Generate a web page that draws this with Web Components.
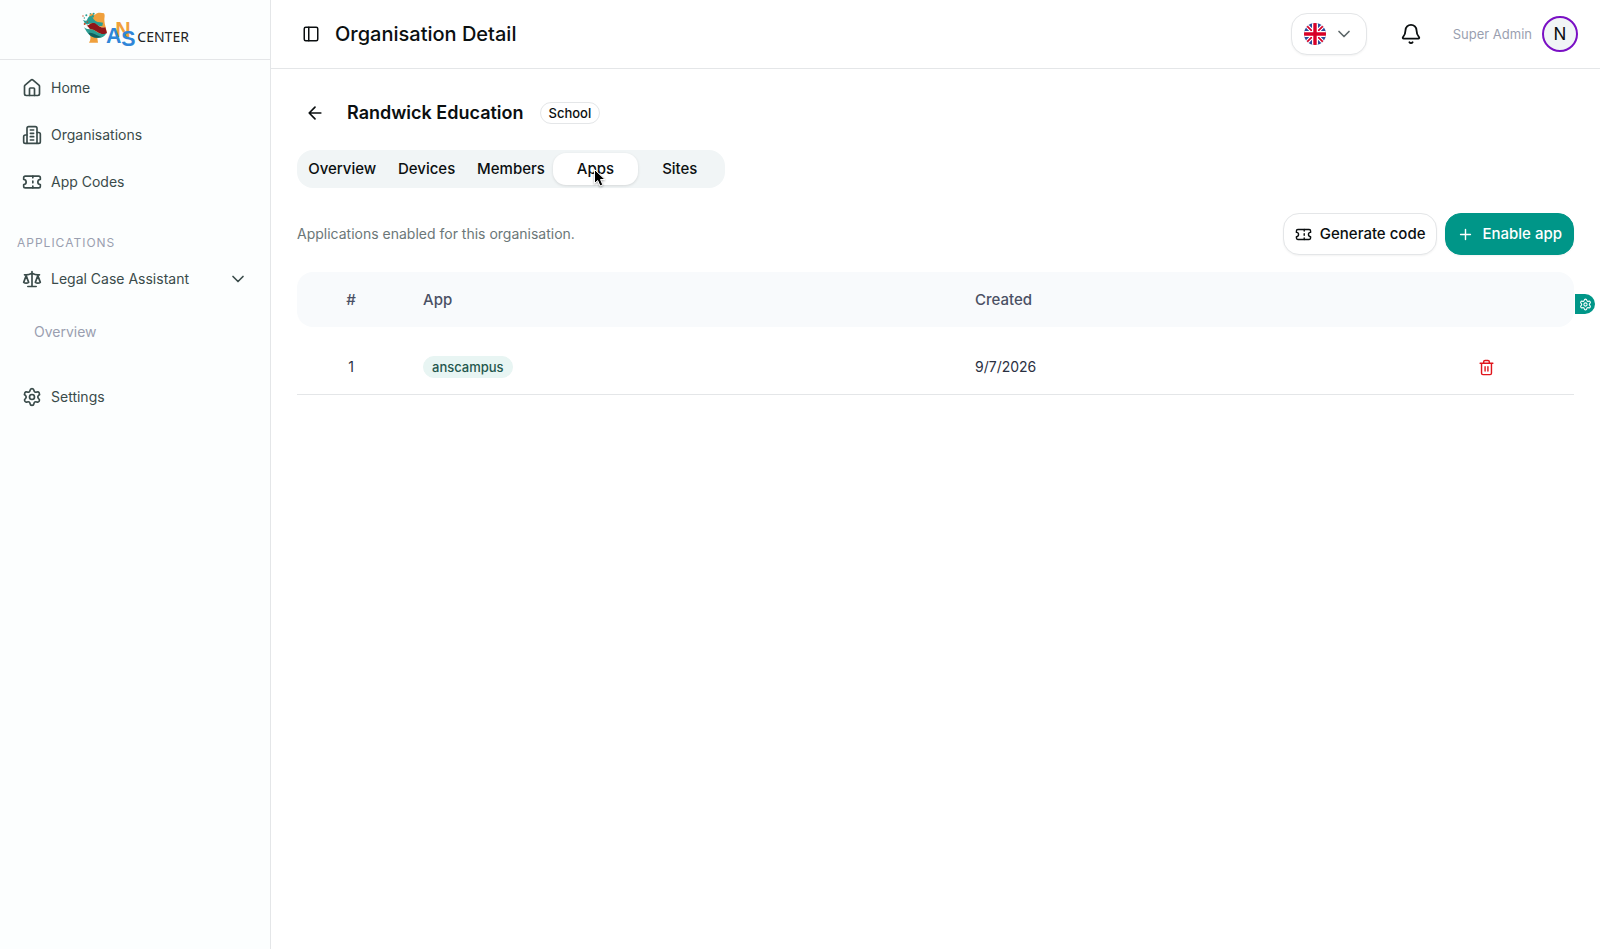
<!DOCTYPE html>
<html lang="en">
<head>
<meta charset="utf-8">
<meta name="viewport" content="width=device-width, initial-scale=1">
<title>Organisation Detail</title>
<style>
  html, body { margin: 0; height: 100%; }
  body {
    font-family: Inter, "Liberation Sans", sans-serif;
    font-size: 14px; line-height: 20px; color: #0b0f10; background: #fff;
    --line: #e4e6e8; --teal: #009688; --ink: #3a4b4a; --muted: #9a9fb0;
  }
</style>
</head>
<body>
<org-app></org-app>

<script>
const ICONS = {
  home: '<path d="M15 21v-8a1 1 0 0 0-1-1h-4a1 1 0 0 0-1 1v8"/><path d="M3 10a2 2 0 0 1 .709-1.528l7-5.999a2 2 0 0 1 2.582 0l7 5.999A2 2 0 0 1 21 10v9a2 2 0 0 1-2 2H5a2 2 0 0 1-2-2z"/>',
  building: '<path d="M6 22V4a2 2 0 0 1 2-2h8a2 2 0 0 1 2 2v18Z"/><path d="M6 12H4a2 2 0 0 0-2 2v6a2 2 0 0 0 2 2h2"/><path d="M18 9h2a2 2 0 0 1 2 2v9a2 2 0 0 1-2 2h-2"/><path d="M10 6h4M10 10h4M10 14h4M10 18h4"/>',
  ticket: '<path d="M2 9a3 3 0 0 1 0 6v2a2 2 0 0 0 2 2h16a2 2 0 0 0 2-2v-2a3 3 0 0 1 0-6V7a2 2 0 0 0-2-2H4a2 2 0 0 0-2 2Z"/><path d="M13 5v2M13 17v2M13 11v2"/>',
  scale: '<path d="m16 16 3-8 3 8c-.87.65-1.92 1-3 1s-2.13-.35-3-1Z"/><path d="m2 16 3-8 3 8c-.87.65-1.92 1-3 1s-2.13-.35-3-1Z"/><path d="M7 21h10M12 3v18M3 7h2c2 0 5-1 7-2 2 1 5 2 7 2h2"/>',
  settings: '<path d="M9.671 4.136a2.34 2.34 0 0 1 4.659 0 2.34 2.34 0 0 0 3.319 1.915 2.34 2.34 0 0 1 2.33 4.033 2.34 2.34 0 0 0 0 3.831 2.34 2.34 0 0 1-2.33 4.033 2.34 2.34 0 0 0-3.319 1.915 2.34 2.34 0 0 1-4.659 0 2.34 2.34 0 0 0-3.32-1.915 2.34 2.34 0 0 1-2.33-4.033 2.34 2.34 0 0 0 0-3.831A2.34 2.34 0 0 1 6.35 6.051a2.34 2.34 0 0 0 3.319-1.915"/><circle cx="12" cy="12" r="3"/>',
  chevron: '<path d="m6 9 6 6 6-6"/>',
  panel: '<rect width="18" height="18" x="3" y="3" rx="2"/><path d="M9 3v18"/>',
  bell: '<path d="M10.268 21a2 2 0 0 0 3.464 0"/><path d="M3.262 15.326A1 1 0 0 0 4 17h16a1 1 0 0 0 .74-1.673C19.41 13.956 18 12.499 18 8A6 6 0 0 0 6 8c0 4.499-1.411 5.956-2.738 7.326"/>',
  back: '<path d="m12 19-7-7 7-7M19 12H5"/>',
  plus: '<path d="M5 12h14M12 5v14"/>',
  trash: '<path d="M3 6h18M19 6v14a2 2 0 0 1-2 2H7a2 2 0 0 1-2-2V6M8 6V4a2 2 0 0 1 2-2h4a2 2 0 0 1 2 2v2M10 11v6M14 11v6"/>'
};

function define(name, html, setup) {
  const template = document.createElement('template');
  template.innerHTML = html;
  customElements.define(name, class extends HTMLElement {
    constructor() {
      super();
      this.attachShadow({ mode: 'open' }).append(template.content.cloneNode(true));
    }
    connectedCallback() { if (setup) setup(this, this.shadowRoot); }
  });
}

define('ui-icon', `
  <style>
    :host { display: block; flex: none; width: var(--size, 20px); height: var(--size, 20px); }
    svg { display: block; width: 100%; height: 100%; fill: none; stroke: currentColor;
          stroke-width: 2; stroke-linecap: round; stroke-linejoin: round; }
  </style>
  <svg viewBox="0 0 24 24" aria-hidden="true"></svg>`,
  (el, root) => { root.querySelector('svg').innerHTML = ICONS[el.getAttribute('name')]; });

define('brand-logo', `
  <style>
    :host { display: block; width: 130px; height: 59px; }
    svg { display: block; width: 100%; height: 100%; }
    .ans { font: bold 64px "Liberation Sans", sans-serif; }
    .center { font: 42px "Noto Sans", sans-serif; fill: #222; }
  </style>
  <svg viewBox="0 0 390 177" role="img" aria-label="ANS Center">
    <path fill="#f0a03c" d="M58 44l8-4 8 5c6-8 18-8 28-5 3 5 2 10 1 17 0 10 2 17 4 25l3 14-7 4c-3 12-8 13-21 14l2 14H57c6-9 5-17 2-26z"/>
    <path fill="#2b9d92" d="M38 60c7 2 11 5 14-2 3-9 10-14 15-6 5 9 12 15 24 15l8 1-2 10c-12 2-19-3-27-7-10-4-15 6-23 1-5-3-4-8-9-12z"/>
    <path fill="#f3d29a" d="M49 77c10 2 16-7 25-5 12 3 17 12 29 9l1 6c-12 4-20-3-29-6-10-4-18 2-26-4z"/>
    <path fill="#8f1519" d="M50 76c7 2 10-6 18-7 11-1 14 8 22 11 6 3 10 3 16 2l5 17c-6 6-15 5-24 0-8-5-14-9-23-11-7-1-8-8-14-12z"/>
    <path fill="#2b9d92" d="M42 81c8 9 17 5 27 8 11 4 18 14 34 13l6-2c-6 14-25 18-42 10-13-5-19-18-25-29z"/>
    <path fill="#115f5c" d="M55 99c14-3 22 8 38 11-13 7-31 3-38-11z"/>
    <g fill="#c8471f"><circle cx="39" cy="48" r="2"/><circle cx="44" cy="72" r="3"/><circle cx="52" cy="66" r="2"/></g>
    <g fill="#2b9d92"><circle cx="61" cy="41" r="2"/><circle cx="71" cy="41" r="3"/><circle cx="68" cy="49" r="4"/><circle cx="49" cy="46" r="3"/><circle cx="43" cy="54" r="2"/></g>
    <text class="ans" x="136" y="111" fill="#f0a03c">N</text>
    <text class="ans" x="108" y="129" fill="#2f86d8">A</text>
    <text class="ans" x="154" y="139" fill="#2f86d8">S</text>
    <text class="center" x="202" y="127">CENTER</text>
  </svg>`);

define('nav-item', `
  <style>
    :host { display: block; }
    a { display: flex; align-items: center; gap: 9px; height: 40px; padding: 0 22px;
        color: var(--ink); text-decoration: none; }
    span { flex: 1; }
    :host([sub]) a { padding-left: 34px; color: var(--muted); }
  </style>
  <a href="#"><span><slot></slot></span></a>`,
  (el, root) => {
    const link = root.querySelector('a');
    const add = (name, where) => {
      const icon = document.createElement('ui-icon');
      icon.setAttribute('name', name);
      link[where](icon);
    };
    if (el.hasAttribute('icon')) add(el.getAttribute('icon'), 'prepend');
    if (el.hasAttribute('expandable')) add('chevron', 'append');
  });

define('side-bar', `
  <style>
    :host { display: flex; flex-direction: column; box-sizing: border-box; width: 271px; flex: none;
            background: #fcfefe; border-right: 1px solid var(--line); }
    header { display: flex; justify-content: center; border-bottom: 1px solid var(--line); }
    nav { display: flex; flex-direction: column; padding: 8px 0; }
    .group { display: flex; flex-direction: column; gap: 7px; }
    h2 { margin: 31px 0 6px; padding: 0 17px; font-size: 12px; line-height: 20px; font-weight: 400;
         letter-spacing: 1px; color: var(--muted); }
    .apps { gap: 13px; margin-bottom: 25px; }
  </style>
  <header><brand-logo></brand-logo></header>
  <nav aria-label="Main">
    <div class="group">
      <nav-item icon="home">Home</nav-item>
      <nav-item icon="building">Organisations</nav-item>
      <nav-item icon="ticket">App Codes</nav-item>
    </div>
    <h2>APPLICATIONS</h2>
    <div class="group apps">
      <nav-item icon="scale" expandable>Legal Case Assistant</nav-item>
      <nav-item sub>Overview</nav-item>
    </div>
    <nav-item icon="settings">Settings</nav-item>
  </nav>`);

define('language-picker', `
  <style>
    :host { display: block; }
    button { display: flex; align-items: center; gap: 8px; height: 42px; padding: 0 12px; background: #fff;
             border: 1px solid var(--line); border-radius: 16px; box-shadow: 0 1px 2px #0000000d; color: #5d6769; }
    svg { display: block; width: 22px; height: 22px; }
  </style>
  <button type="button" aria-label="Language: English">
    <svg viewBox="0 0 22 22" aria-hidden="true">
      <clipPath id="round"><circle cx="11" cy="11" r="11"/></clipPath>
      <g clip-path="url(#round)">
        <path fill="#2b4a9b" d="M0 0h22v22H0z"/>
        <path stroke="#fff" stroke-width="4" d="M0 0l22 22M22 0L0 22"/>
        <path stroke="#d80027" stroke-width="1.6" d="M0 0l22 22M22 0L0 22"/>
        <path stroke="#fff" stroke-width="6" d="M11 0v22M0 11h22"/>
        <path stroke="#d80027" stroke-width="3.4" d="M11 0v22M0 11h22"/>
      </g>
    </svg>
    <ui-icon name="chevron"></ui-icon>
  </button>`);

define('user-badge', `
  <style>
    :host { display: flex; align-items: center; gap: 10px; font-size: 13px; color: var(--muted); }
    b { display: grid; place-items: center; box-sizing: border-box; width: 36px; height: 36px; border-radius: 50%;
        border: 2px solid #7a10c4; background: #f1f5f6; font-size: 17px; font-weight: 400; color: #0b0f10; }
  </style>
  <span><slot></slot></span><b>N</b>`);

define('top-bar', `
  <style>
    :host { display: flex; align-items: center; box-sizing: border-box; height: 69px; padding: 0 22px 0 31px;
            border-bottom: 1px solid var(--line); }
    h1 { flex: 1; margin: 0 0 0 7px; font-size: 20px; line-height: 28px; font-weight: 500; }
    button { padding: 0; border: 0; background: none; color: inherit; }
    .toggle { --size: 18px; padding: 0 8px 0 0; }
    .bell { --size: 22px; margin: 0 31px 0 33px; }
  </style>
  <button class="toggle" type="button" aria-label="Toggle sidebar"><ui-icon name="panel"></ui-icon></button>
  <h1><slot></slot></h1>
  <language-picker></language-picker>
  <button class="bell" type="button" aria-label="Notifications"><ui-icon name="bell"></ui-icon></button>
  <user-badge>Super Admin</user-badge>`);

define('ui-badge', `
  <style>
    :host { display: inline-block; box-sizing: border-box; height: 22px; padding: 0 8px; border: 1px solid var(--line);
            border-radius: 11px; font-size: 13px; line-height: 20px; font-weight: 500; }
    :host([tone="teal"]) { border-color: #e8f5f3; background: #e8f5f3; color: #24574d; }
  </style>
  <slot></slot>`);

define('ui-button', `
  <style>
    :host { display: block; }
    button { display: flex; align-items: center; gap: 8px; height: 42px; padding: 0 11px; border-radius: 16px;
             border: 1px solid var(--line); background: #fff; box-shadow: 0 1px 2px #0000000d;
             font: 500 15px/20px Inter, sans-serif; color: #0b0f10; }
    ui-icon { --size: 17px; }
    :host([primary]) button { border-color: var(--teal); background: var(--teal); color: #fff; }
  </style>
  <button type="button"><ui-icon></ui-icon><slot></slot></button>`,
  (el, root) => {
    const icon = document.createElement('ui-icon');
    icon.setAttribute('name', el.getAttribute('icon'));
    root.querySelector('ui-icon').replaceWith(icon);
  });

define('ui-tab', `
  <style>
    :host { display: block; position: relative; }
    button { width: 100%; height: 32px; padding: 0; border: 0; border-radius: 13px; background: none;
             font: 500 15px/20px Inter, sans-serif; color: #0b0f10; }
    :host([selected]) button { background: #fff; box-shadow: 0 1px 3px #0000001f; }
  </style>
  <button type="button" role="tab"><slot></slot></button>
  <slot name="pointer"></slot>`,
  (el, root) => root.querySelector('button').setAttribute('aria-selected', el.hasAttribute('selected')));

define('mouse-pointer', `
  <style>
    :host { position: absolute; left: 50%; top: 50%; width: 14px; height: 20px; }
    svg { display: block; width: 100%; height: 100%; overflow: visible; filter: drop-shadow(0 1px 1px #0005); }
  </style>
  <svg viewBox="0 0 14 20" aria-hidden="true">
    <path fill="#000" stroke="#fff" d="M-.5 .5v14l3.200-3 2.300 5.500 2.800-1.200-2.300-5.300h4.500z"/>
  </svg>`);

define('tab-list', `
  <style>
    :host { display: grid; grid-template-columns: repeat(5, 1fr); box-sizing: border-box; width: 428px;
            max-width: 100%; padding: 3px; border-radius: 16px; background: #f1f5f6; }
  </style>
  <slot></slot>`,
  el => el.setAttribute('role', 'tablist'));

define('apps-table', `
  <style>
    :host { display: block; }
    table { width: 100%; table-layout: fixed; border-spacing: 0; }
    th, td { padding: 0 18px; text-align: left; color: #2a3042; }
    th { height: 55px; background: #f8fafc; font-size: 15px; font-weight: 500; color: #4a5064; }
    td { height: 54px; padding-top: 13px; border-bottom: 1px solid var(--line); }
    th:first-child { border-radius: 16px 0 0 16px; }
    th:last-child { border-radius: 0 16px 16px 0; }
    th:first-child, td:first-child { text-align: center; }
    .n { width: 108px; } .created { width: 441px; } .act { width: 176px; }
    td button { display: block; margin: 0 auto; padding: 0; border: 0; background: none; color: #e0151c; --size: 17px; }
  </style>
  <table>
    <colgroup><col class="n"><col><col class="created"><col class="act"></colgroup>
    <thead><tr><th scope="col">#</th><th scope="col">App</th><th scope="col">Created</th><th scope="col" aria-label="Actions"></th></tr></thead>
    <tbody><tr>
      <td>1</td>
      <td><ui-badge tone="teal">anscampus</ui-badge></td>
      <td>9/7/2026</td>
      <td><button type="button" aria-label="Remove anscampus"><ui-icon name="trash"></ui-icon></button></td>
    </tr></tbody>
  </table>`);

define('settings-handle', `
  <style>
    :host { position: absolute; right: 5px; top: 294px; }
    button { display: grid; place-items: center; width: 20px; height: 20px; padding: 0; border: 0;
             border-radius: 0 10px 10px 0; background: var(--teal); color: #fff; --size: 13px; }
  </style>
  <button type="button" aria-label="Display settings"><ui-icon name="settings"></ui-icon></button>`);

define('org-detail', `
  <style>
    :host { display: block; padding: 30px 26px; }
    .title { display: flex; align-items: center; height: 28px; }
    .title button { padding: 0 22px 0 8px; border: 0; background: none; color: inherit; --size: 20px; }
    h2 { margin: 0 16px 0 0; font-size: 18px; line-height: 28px; font-weight: 600; }
    tab-list { margin: 23px 0 25px; }
    .actions { display: flex; align-items: center; gap: 8px; margin-bottom: 17px; }
    p { flex: 1; margin: 0; color: #6b7778; }
  </style>
  <div class="title">
    <button type="button" aria-label="Back"><ui-icon name="back"></ui-icon></button>
    <h2>Randwick Education</h2>
    <ui-badge>School</ui-badge>
  </div>
  <tab-list>
    <ui-tab>Overview</ui-tab>
    <ui-tab>Devices</ui-tab>
    <ui-tab>Members</ui-tab>
    <ui-tab selected>Apps<mouse-pointer slot="pointer"></mouse-pointer></ui-tab>
    <ui-tab>Sites</ui-tab>
  </tab-list>
  <div class="actions">
    <p>Applications enabled for this organisation.</p>
    <ui-button icon="ticket">Generate code</ui-button>
    <ui-button icon="plus" primary>Enable app</ui-button>
  </div>
  <apps-table></apps-table>`);

define('org-app', `
  <style>
    :host { display: flex; position: relative; min-height: 100%; }
    main { flex: 1; min-width: 0; }
  </style>
  <side-bar></side-bar>
  <main>
    <top-bar>Organisation Detail</top-bar>
    <org-detail></org-detail>
  </main>
  <settings-handle></settings-handle>`);
</script>
</body>
</html>
